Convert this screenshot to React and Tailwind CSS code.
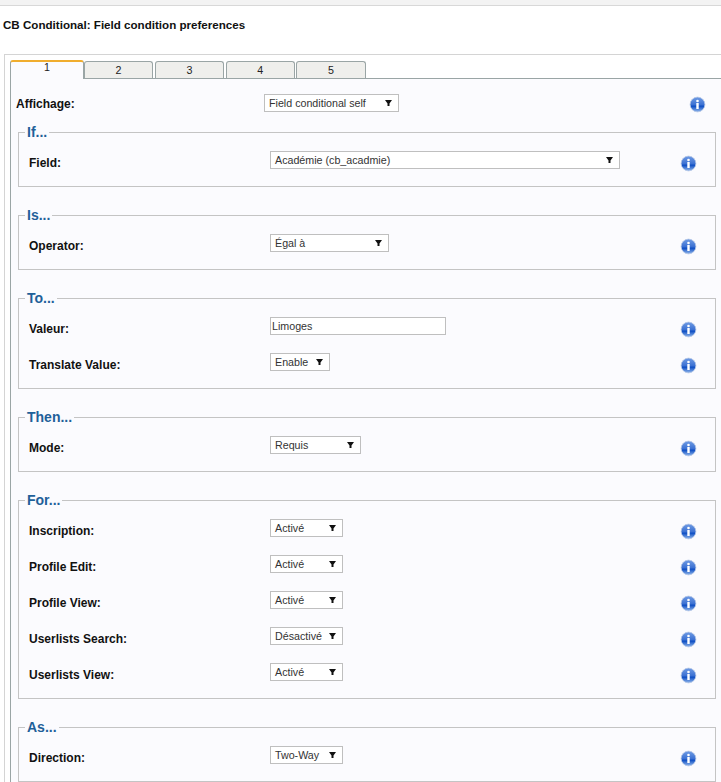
import React from "react";

const InfoIcon = () => (
  <svg width="17" height="17" viewBox="0 0 17 17" className="shrink-0">
    <defs>
      <linearGradient id="infoBlue" x1="0" y1="0" x2="0" y2="1">
        <stop offset="0" stopColor="#6f9be4" />
        <stop offset="0.5" stopColor="#3d72d3" />
        <stop offset="0.62" stopColor="#0f4fc4" />
        <stop offset="1" stopColor="#93b8ec" />
      </linearGradient>
    </defs>
    <circle cx="8.5" cy="8.5" r="7.4" fill="url(#infoBlue)" stroke="#b9c9e6" strokeWidth="0.8" />
    <circle cx="8.5" cy="5" r="1.3" fill="#fff" />
    <rect x="7.3" y="7" width="2.4" height="6" fill="#fff" />
  </svg>
);

const Select = ({ value, width }) => (
  <div className={`flex h-[18px] items-center justify-between border border-[#bfbfbf] bg-white pl-1 pr-[6px] text-[10.7px] text-[#333] ${width}`}>
    <span className="whitespace-nowrap">{value}</span>
    <svg width="7" height="6" viewBox="0 0 7 6" className="shrink-0">
      <path d="M0 0H7L4.5 3.5V6H2.5V3.5Z" fill="#111" />
    </svg>
  </div>
);

const Row = ({ label, children, className = "" }) => (
  <div className={`flex h-[18px] items-center ${className}`}>
    <div className="relative top-[3px] w-[241px] shrink-0 text-xs font-bold text-[#111]">{label}</div>
    <div className="flex-1">{children}</div>
    <div className="relative top-[3px] mr-[8px]">
      <InfoIcon />
    </div>
  </div>
);

const Group = ({ title, children, className = "" }) => (
  <fieldset className={`mr-[5px] ml-[7px] border border-[#c4c4c4] px-[10px] ${className}`}>
    <legend className="ml-[-4px] px-[2px] text-[14px] leading-[16px] font-bold text-[#1f6099]">{title}</legend>
    {children}
  </fieldset>
);

export default function App() {
  return (
    <div className="h-[782px] w-[721px] overflow-hidden bg-white font-['Liberation_Sans',Arial,sans-serif]">
      <div className="h-[6px] border-b border-[#d8d8d8] bg-[#f3f3f3]" />
      <h1 className="pt-[12px] pl-[3px] text-[11.6px] leading-[14px] font-bold text-[#111]">CB Conditional: Field condition preferences</h1>

      <div className="mt-[22px] ml-1 border-t border-l border-[#d4d4d4] pt-[5px] pl-[5px]">
        <div className="flex h-[18px] items-end">
          <div className="z-10 mb-[-1px] flex h-[19px] w-[74px] justify-center rounded-t-[3px] border-x border-[#9aa5a5] border-t-2 border-t-[#f0ad2e] bg-[#fbfbfe] text-[10.7px] leading-[10px] text-[#222]">1</div>
          <div className="flex gap-[1.6px]">
            {["2", "3", "4", "5"].map((tab) => (
              <div key={tab} className="flex h-[17px] w-[69.2px] justify-center rounded-t-[3px] border-x border-t border-[#9aa5a5] bg-[#efefec] pt-[1px] text-[10.7px] leading-[14px] text-[#222]">{tab}</div>
            ))}
          </div>
        </div>

        <div className="border-t border-l border-[#9aa5a5] bg-[#fbfbfe] pb-4">
          <div className="mt-[15px] flex h-[18px] items-center pl-[5px]">
            <div className="relative top-[1px] w-[248px] shrink-0 text-xs font-bold text-[#111]">Affichage:</div>
            <div className="flex-1"><Select value="Field conditional self" width="w-[135px]" /></div>
            <div className="relative top-[1px] mr-[15px]"><InfoIcon /></div>
          </div>

          <Group title="If..." className="mt-[12px] h-[63px] pt-[11px]">
            <Row label="Field:"><Select value="Académie (cb_acadmie)" width="w-[350px]" /></Row>
          </Group>

          <Group title="Is..." className="mt-[20px] h-[63px] pt-[11px]">
            <Row label="Operator:"><Select value="Égal à" width="w-[119px]" /></Row>
          </Group>

          <Group title="To..." className="mt-[20px] h-[99px] pt-[11px]">
            <Row label="Valeur:">
              <div className="flex h-[18px] w-[176px] items-center border border-[#bfbfbf] bg-white pl-px text-[10.7px] text-[#333]">Limoges</div>
            </Row>
            <Row label="Translate Value:" className="mt-[18px]"><Select value="Enable" width="w-[60px]" /></Row>
          </Group>

          <Group title="Then..." className="mt-[20px] h-[63px] pt-[11px]">
            <Row label="Mode:"><Select value="Requis" width="w-[91px]" /></Row>
          </Group>

          <Group title="For..." className="mt-[20px] h-[207px] pt-[11px]">
            <div className="flex flex-col gap-[18px]">
              <Row label="Inscription:"><Select value="Activé" width="w-[73px]" /></Row>
              <Row label="Profile Edit:"><Select value="Activé" width="w-[73px]" /></Row>
              <Row label="Profile View:"><Select value="Activé" width="w-[73px]" /></Row>
              <Row label="Userlists Search:"><Select value="Désactivé" width="w-[73px]" /></Row>
              <Row label="Userlists View:"><Select value="Activé" width="w-[73px]" /></Row>
            </div>
          </Group>

          <Group title="As..." className="mt-[20px] h-[63px] pt-[11px]">
            <Row label="Direction:"><Select value="Two-Way" width="w-[73px]" /></Row>
          </Group>
        </div>
      </div>
    </div>
  );
}
